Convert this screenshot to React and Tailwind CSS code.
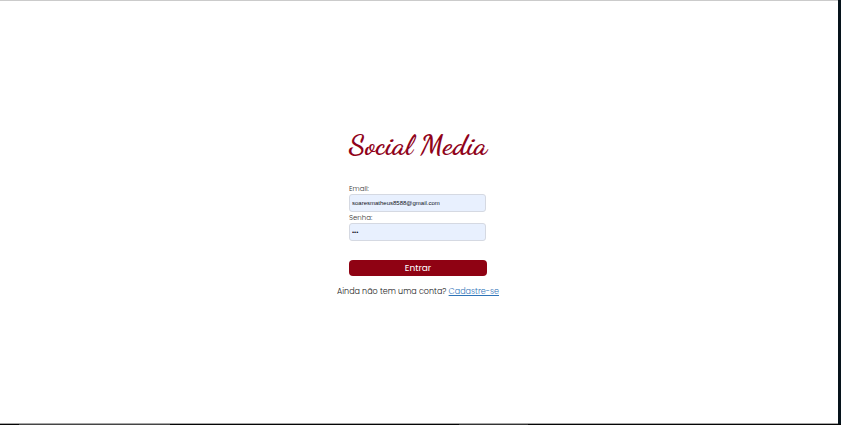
function Field({ id, label, type, value, autoComplete }) {
  return (
    <div className="flex flex-col">
      <label htmlFor={id} className="text-[7px] leading-[11px] font-light text-[#333333]">
        {label}
      </label>
      <input
        id={id}
        type={type}
        defaultValue={value}
        autoComplete={autoComplete}
        className="h-[18px] w-full rounded-[3px] border border-[#d5d9e2] bg-[#e8f0fe] px-[2px] font-['Liberation_Sans',sans-serif] text-[6px] text-[#10131a] outline-none"
      />
    </div>
  );
}

export default function App() {
  return (
    <div className="flex h-screen flex-col overflow-hidden bg-[#06131b] font-['Poppins','Inter',sans-serif]">
      <main className="mr-[3px] flex flex-1 flex-col items-center justify-center border-y border-t-[#cbcbcb] border-b-[#a5a5a5] bg-white pt-[3px] pr-0.5">
        <h1 className="font-['Dancing_Script','Liberation_Serif',cursive] text-[29px] leading-9 font-bold whitespace-nowrap text-[#90031a]">
          Social Media
        </h1>
        <form className="mt-5 flex w-[138px] flex-col" onSubmit={(e) => e.preventDefault()}>
          <div className="mr-px flex flex-col">
            <Field id="email" label="Email:" type="email" value="soaresmatheus8588@gmail.com" autoComplete="email" />
            <Field id="senha" label="Senha:" type="password" value="123" autoComplete="current-password" />
          </div>
          <button type="submit" className="mt-[19px] h-4 rounded-[4px] bg-[#8f0213] text-[9px] leading-4 text-white">
            Entrar
          </button>
        </form>
        <p className="mt-2 text-[8px] leading-4 font-light whitespace-nowrap text-[#222222]">
          Ainda não tem uma conta?{" "}
          <a href="#cadastro" className="text-[#2f74b8] underline">
            Cadastre-se
          </a>
        </p>
      </main>
      <footer className="flex h-px bg-[#050505]">
        <span className="ml-[19px] w-[151px] bg-[#454545]" />
        <span className="ml-[289px] w-[69px] bg-[#333333]" />
      </footer>
    </div>
  );
}
